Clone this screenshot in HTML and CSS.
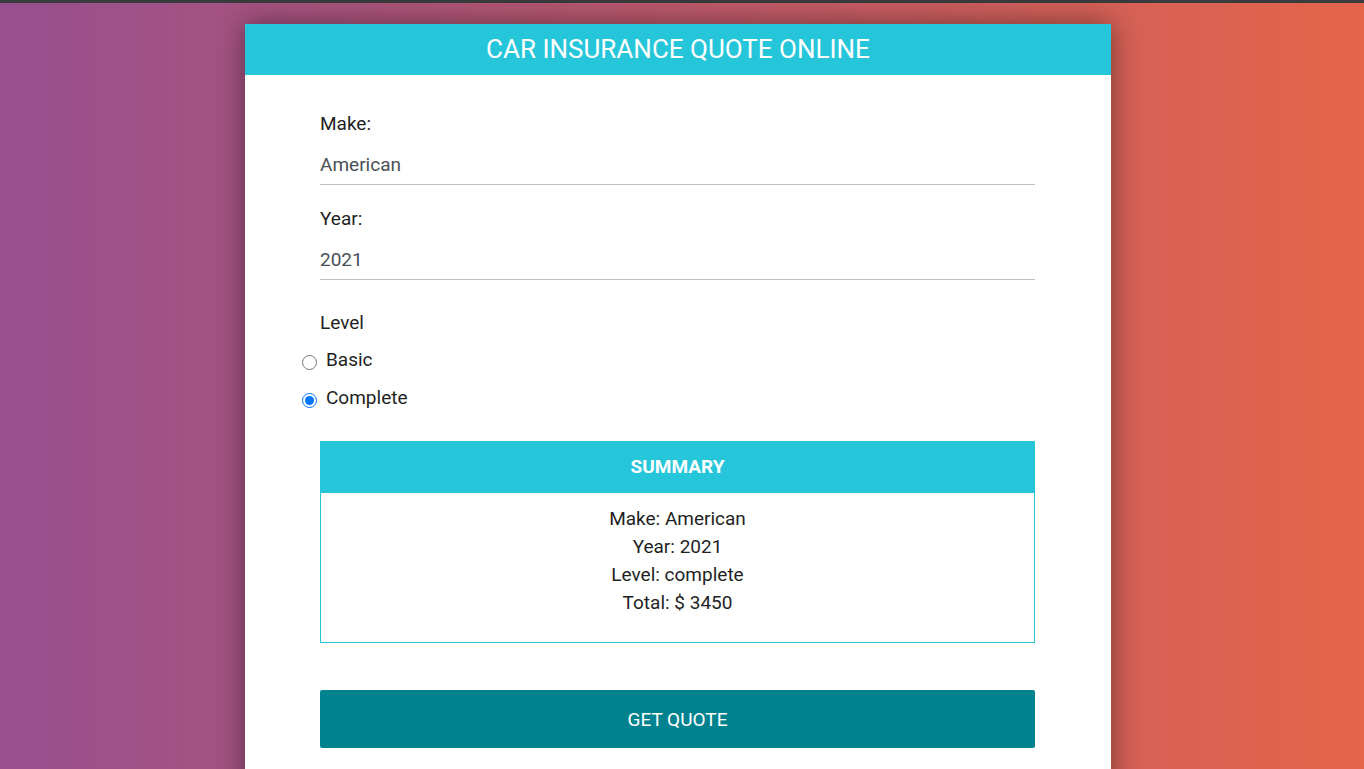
FILE: index.html
```html
<!DOCTYPE html>
<html lang="en">
<head>
    <meta charset="UTF-8">
    <meta name="viewport" content="width=device-width, initial-scale=1.0">
    <title>Car Insurance Quote</title>
    <link rel="stylesheet" href="styles.css">
</head>
<body>
    <div class="topbar"></div>
    <div class="page">
        <div class="card">
            <header class="card-header">CAR INSURANCE QUOTE ONLINE</header>

            <form class="quote-form">
                <div class="field">
                    <label for="make">Make:</label>
                    <input type="text" id="make" value="American">
                </div>

                <div class="field">
                    <label for="year">Year:</label>
                    <input type="text" id="year" value="2021">
                </div>

                <div class="level">
                    <div class="level-title">Level</div>
                    <label class="radio">
                        <input type="radio" name="level" value="basic">
                        <span>Basic</span>
                    </label>
                    <label class="radio">
                        <input type="radio" name="level" value="complete" checked>
                        <span>Complete</span>
                    </label>
                </div>

                <div class="summary">
                    <div class="summary-header">SUMMARY</div>
                    <div class="summary-body">
                        <p>Make: American</p>
                        <p>Year: 2021</p>
                        <p>Level: complete</p>
                        <p>Total: $ 3450</p>
                    </div>
                </div>

                <button type="button" class="btn-quote">GET QUOTE</button>
            </form>
        </div>
    </div>
</body>
</html>
```

FILE: styles.css
```css
body {
    font-family: Roboto, 'Liberation Sans', sans-serif;
    margin: 0;
    min-height: 100vh;
    background: linear-gradient(to right, #974f8e, #e4654a);
    color: #1f1f1f;
    overflow: hidden;
}

.topbar {
    height: 3px;
    background: #3a3b3c;
}

.page {
    padding: 21px 8px 0 0;
}

.card {
    width: 866px;
    margin: 0 auto;
    background: #fff;
    box-shadow: 0 0 28px rgba(0, 0, 0, 0.45);
    padding-bottom: 60px;
}

.card-header {
    background: #26c6da;
    color: #fff;
    text-align: center;
    font-size: 26px;
    height: 51px;
    line-height: 50px;
}

.quote-form {
    padding: 35px 76px 0 75px;
}

.field {
    margin-bottom: 20px;
}

.field label {
    display: block;
    font-size: 19px;
    line-height: 27px;
    margin-bottom: 8px;
}

.field input {
    display: block;
    width: 100%;
    box-sizing: border-box;
    height: 40px;
    border: none;
    border-bottom: 1px solid #bdbdbd;
    padding: 0;
    font-family: inherit;
    font-size: 19px;
    color: #495057;
    outline: none;
}

.level {
    margin-top: 29px;
}

.level-title {
    font-size: 19px;
    line-height: 27px;
    margin-bottom: 10px;
}

.radio {
    display: flex;
    align-items: flex-start;
    font-size: 19px;
    line-height: 27px;
    margin-bottom: 11px;
}

.radio input {
    width: 15px;
    height: 15px;
    margin: 9px 9px 0 -18px;
    flex-shrink: 0;
}

.summary {
    margin-top: 30px;
    border: 1px solid #26c6da;
}

.summary-header {
    background: #26c6da;
    color: #fff;
    font-weight: bold;
    font-size: 19px;
    text-align: center;
    height: 52px;
    line-height: 52px;
    margin: -1px -1px 0;
}

.summary-body {
    text-align: center;
    padding: 12px 0 25px;
}

.summary-body p {
    margin: 0;
    font-size: 19px;
    line-height: 28px;
}

.btn-quote {
    display: block;
    width: 100%;
    margin-top: 47px;
    height: 58px;
    border: none;
    border-radius: 2px;
    background: #00838f;
    color: #fff;
    font-family: inherit;
    font-size: 19px;
}
```
